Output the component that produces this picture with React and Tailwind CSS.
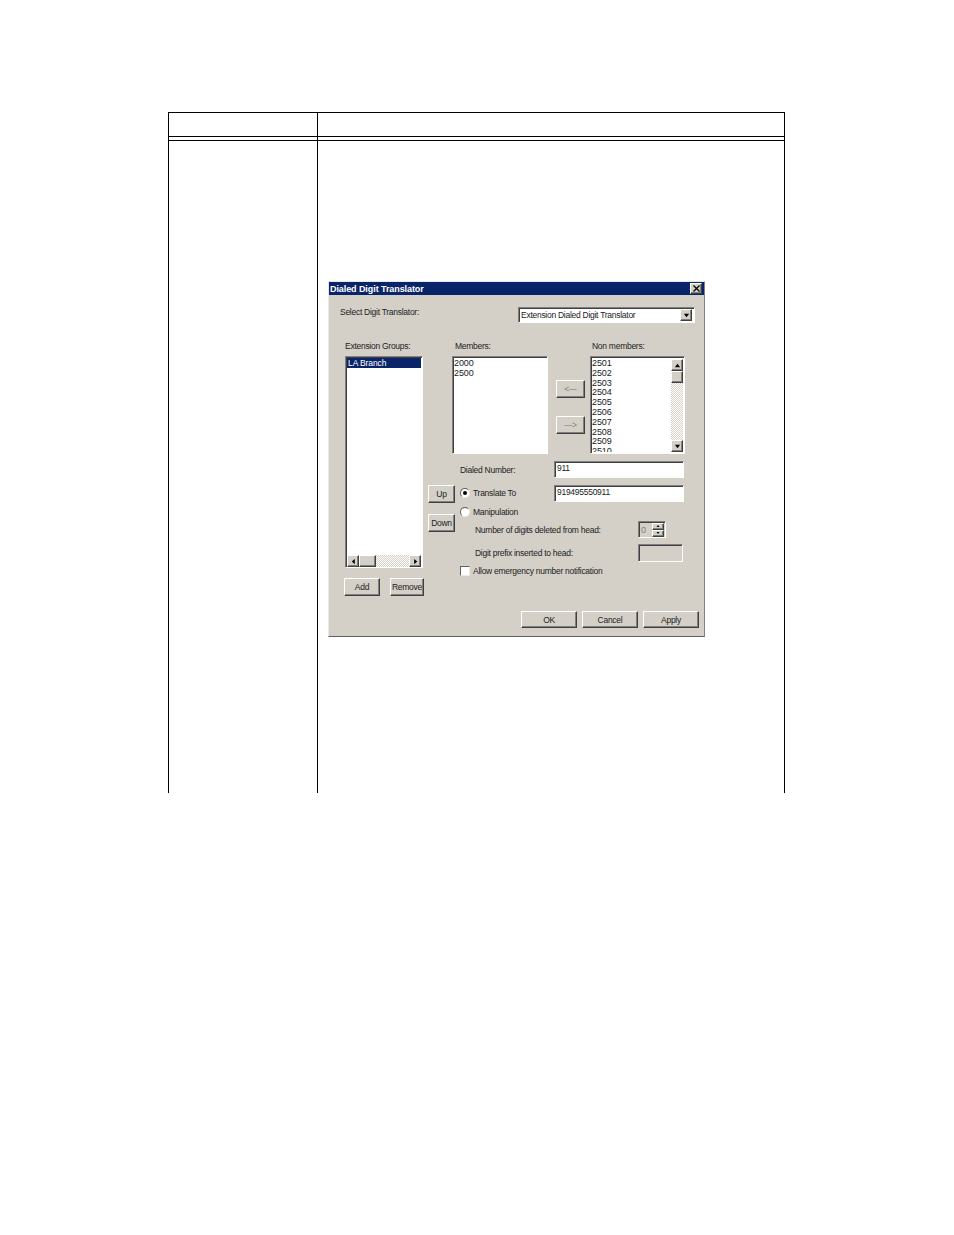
import React from 'react';

const raised = 'border border-t-white border-l-white border-r-[#404040] border-b-[#404040] shadow-[inset_-1px_-1px_0_#808080] bg-[#d4d0c8]';
const sunken = 'border border-t-[#808080] border-l-[#808080] border-r-white border-b-white shadow-[inset_1px_1px_0_#404040]';

const nonMembers = ['2501', '2502', '2503', '2504', '2505', '2506', '2507', '2508', '2509', '2510'];

const Arrow = ({ dir, size = 7 }) => {
  const points = {
    up: '4,2 1,6 7,6',
    down: '1,2 7,2 4,6',
    left: '5.5,1 5.5,7 2,4',
    right: '2.5,1 2.5,7 6,4',
  };
  return (
    <svg width={size} height={size} viewBox="0 0 8 8">
      <polygon points={points[dir]} fill="#000" />
    </svg>
  );
};

const ScrollBtn = ({ dir }) => (
  <div className={`w-[12px] h-[12px] flex items-center justify-center shrink-0 ${raised}`}>
    <Arrow dir={dir} />
  </div>
);

const Btn = ({ className = '', disabled, children }) => (
  <div className={`flex items-center justify-center ${disabled ? 'text-[#808080]' : 'text-[#222]'} ${raised} ${className}`}>
    {children}
  </div>
);

const Radio = ({ checked }) => (
  <div className="w-[10px] h-[10px] rounded-full bg-white border border-t-[#606060] border-l-[#606060] border-r-[#e8e8e8] border-b-[#e8e8e8] flex items-center justify-center shrink-0">
    {checked && <div className="w-[4px] h-[4px] rounded-full bg-black" />}
  </div>
);

const App = () => {
  return (
    <div className="min-h-[1235px] bg-white pt-[112px] pl-[168px] font-['Liberation_Sans',Arial,sans-serif]">
      {/* Outer table */}
      <div className="w-[617px] h-[681px] flex flex-col border-t border-l border-r border-black">
        <div className="h-[24px] flex shrink-0 border-b border-black">
          <div className="w-[149px] border-r border-black" />
        </div>
        <div className="h-[4px] flex shrink-0 border-b border-black">
          <div className="w-[149px] border-r border-black" />
        </div>
        <div className="flex-1 flex">
          <div className="w-[149px] border-r border-black shrink-0" />
          <div className="pl-[10px] pt-[140px]">
            {/* Dialog */}
            <div className="w-[377px] h-[356px] bg-[#d4d0c8] border border-t-[#e8e8e8] border-l-[#e8e8e8] border-r-[#808080] border-b-[#606060] flex flex-col text-[8.5px] tracking-[-0.27px] leading-[10px] text-[#222]">
              <div className="h-[13px] bg-[#0a246a] flex items-center justify-between pl-[1px] pr-[2px] shrink-0">
                <span className="text-white font-bold text-[9px] tracking-[-0.08px]">Dialed Digit Translator</span>
                <div className={`w-[12px] h-[11px] flex items-center justify-center ${raised}`}>
                  <svg width="7" height="7" viewBox="0 0 7 7">
                    <path d="M0.5 0.5L6.5 6.5M6.5 0.5L0.5 6.5" stroke="#000" strokeWidth="1.3" />
                  </svg>
                </div>
              </div>

              <div className="flex-1 flex flex-col pl-[15px] pr-[5px]">
                {/* Select row */}
                <div className="flex items-center justify-between h-[16px] mt-[12px] pr-[4px]">
                  <span className="-mt-[6px] ml-[-4px]">Select Digit Translator:</span>
                  <div className={`w-[177px] h-[16px] bg-white flex items-center justify-between pl-[2px] pr-[2px] ${sunken}`}>
                    <span>Extension Dialed Digit Translator</span>
                    <div className={`w-[12px] h-[12px] flex items-center justify-center ${raised}`}>
                      <Arrow dir="down" />
                    </div>
                  </div>
                </div>

                <div className="flex mt-[18px]">
                  {/* Extension groups */}
                  <div className="w-[80px] shrink-0 flex flex-col">
                    <span className="ml-[1px] h-[15px]">Extension Groups:</span>
                    <div className={`ml-[1px] w-[78px] h-[212px] bg-white flex flex-col pt-[1px] px-[1px] pb-0 ${sunken}`}>
                      <div className="h-[10px] bg-[#0a246a] text-white pl-[1px] tracking-[-0.1px]">LA Branch</div>
                      <div className="flex-1" />
                      <div className="flex bg-[repeating-conic-gradient(#d4d0c8_0_25%,#fff_0_50%)] bg-[length:2px_2px]">
                        <ScrollBtn dir="left" />
                        <div className={`w-[17px] h-[12px] ${raised}`} />
                        <div className="flex-1" />
                        <ScrollBtn dir="right" />
                      </div>
                    </div>
                    <div className="flex justify-between mt-[10px]">
                      <Btn className="w-[36px] h-[18px]">Add</Btn>
                      <Btn className="w-[34px] h-[18px]">Remove</Btn>
                    </div>
                  </div>

                  <div className="ml-[4px] flex flex-col">
                    {/* Member lists */}
                    <div className="flex pl-[24px]">
                      <div className="w-[96px] flex flex-col">
                        <span className="ml-[3px] h-[15px]">Members:</span>
                        <div className={`h-[98px] bg-white px-[1px] pt-[2px] text-[9px] tracking-[-0.1px] leading-[9.8px] ${sunken}`}>
                          <div>2000</div>
                          <div>2500</div>
                        </div>
                      </div>
                      <div className="w-[29px] ml-[8px] flex flex-col gap-[18px] pt-[39px]">
                        <Btn disabled className="h-[18px]">&lt;---</Btn>
                        <Btn disabled className="h-[18px]">---&gt;</Btn>
                      </div>
                      <div className="w-[95px] ml-[5px] flex flex-col">
                        <span className="ml-[2px] h-[15px]">Non members:</span>
                        <div className={`h-[98px] bg-white flex overflow-hidden pl-[1px] pt-[2px] pr-[1px] pb-[1px] ${sunken}`}>
                          <div className="flex-1 text-[9px] tracking-[-0.1px] leading-[9.8px] overflow-hidden">
                            {nonMembers.map((n) => <div key={n}>{n}</div>)}
                          </div>
                          <div className="w-[12px] flex flex-col bg-[repeating-conic-gradient(#d4d0c8_0_25%,#fff_0_50%)] bg-[length:2px_2px]">
                            <ScrollBtn dir="up" />
                            <div className={`h-[12px] ${raised}`} />
                            <div className="flex-1" />
                            <ScrollBtn dir="down" />
                          </div>
                        </div>
                      </div>
                    </div>

                    {/* Translate form */}
                    <div className="flex mt-[7px]">
                      <div className="w-[27px] flex flex-col gap-[11px] pt-[24px] shrink-0">
                        <Btn className="h-[18px]">Up</Btn>
                        <Btn className="h-[18px]">Down</Btn>
                      </div>
                      <div className="flex flex-col pl-[5px]">
                        <div className="flex items-center h-[17px]">
                          <span className="w-[94px] mt-[1px]">Dialed Number:</span>
                          <div className={`w-[130px] h-[17px] bg-white pl-[2px] pt-[1px] ${sunken}`}>911</div>
                        </div>
                        <div className="flex items-center h-[17px] mt-[7px]">
                          <div className="w-[94px] -mt-[1px] flex items-center gap-[3px]">
                            <Radio checked />
                            <span>Translate To</span>
                          </div>
                          <div className={`w-[130px] h-[17px] bg-white pl-[2px] pt-[1px] ${sunken}`}>919495550911</div>
                        </div>
                        <div className="flex items-center gap-[3px] mt-[3px] h-[14px]">
                          <Radio />
                          <span>Manipulation</span>
                        </div>
                        <div className="flex items-center h-[17px] mt-[2px] pl-[15px]">
                          <span className="w-[163px]">Number of digits deleted from head:</span>
                          <div className={`w-[28px] h-[17px] flex items-center justify-between pl-[2px] pr-[1px] text-[#808080] text-[9px] ${sunken}`}>
                            <span>0</span>
                            <div className="flex flex-col w-[12px]">
                              <div className={`h-[7px] flex items-center justify-center ${raised}`}>
                                <Arrow dir="up" size={4} />
                              </div>
                              <div className={`h-[7px] flex items-center justify-center ${raised}`}>
                                <Arrow dir="down" size={4} />
                              </div>
                            </div>
                          </div>
                        </div>
                        <div className="flex items-center h-[18px] mt-[6px] pl-[15px]">
                          <span className="w-[163px]">Digit prefix inserted to head:</span>
                          <div className={`w-[45px] h-[18px] ${sunken}`} />
                        </div>
                        <div className="flex items-center gap-[3px] mt-[1px] h-[16px]">
                          <div className="w-[10px] h-[10px] bg-white border border-t-[#606060] border-l-[#606060] border-r-[#e8e8e8] border-b-[#e8e8e8] shrink-0" />
                          <span>Allow emergency number notification</span>
                        </div>
                      </div>
                    </div>
                  </div>
                </div>

                {/* Footer */}
                <div className="flex justify-end gap-[5px] mt-[15px]">
                  <Btn className="w-[56px] h-[17px]">OK</Btn>
                  <Btn className="w-[56px] h-[17px]">Cancel</Btn>
                  <Btn className="w-[56px] h-[17px]">Apply</Btn>
                </div>
              </div>
            </div>
          </div>
        </div>
      </div>
    </div>
  );
};

export default App;
